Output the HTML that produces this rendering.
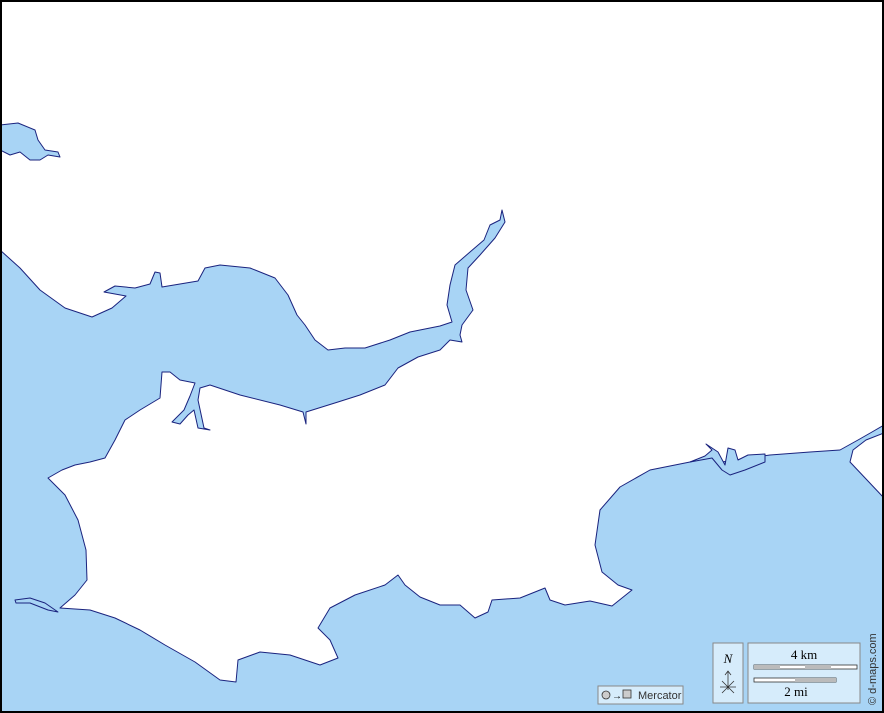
<!DOCTYPE html>
<html><head><meta charset="utf-8"><style>
html,body{margin:0;padding:0;background:#fff}
svg{display:block}
text{font-family:"Liberation Serif",serif}
</style></head><body>
<svg width="884" height="713" viewBox="0 0 884 713" xmlns="http://www.w3.org/2000/svg">
<rect x="0" y="0" width="884" height="713" fill="#fff"/>
<g fill="#a8d4f5" stroke="#1a237e" stroke-width="1" stroke-linejoin="round">
<path d="M0,125 L18,123 L35,130 L38,140 L45,150 L58,152 L60,157 L48,155 L40,160 L30,160 L20,152 L10,155 L0,150 Z"/>
<path d="M0,250 L20,268 L40,290 L65,308 L92,317 L112,308 L126,296 L104,292 L115,286 L135,288 L150,284 L155,272 L160,273 L162,287 L180,284 L198,281 L205,268 L220,265 L250,268 L275,278 L288,295 L297,315 L305,325 L315,340 L328,350 L345,348 L365,348 L390,340 L410,332 L440,326 L452,322 L447,305 L450,285 L455,265 L470,252 L484,240 L490,225 L500,220 L502,210 L505,222 L495,238 L480,255 L468,268 L466,290 L473,310 L462,325 L460,335 L462,342 L450,340 L440,350 L418,357 L398,368 L385,385 L360,395 L338,402 L306,412 L306,424 L303,412 L280,405 L240,395 L210,385 L200,388 L198,400 L204,428 L210,430 L198,428 L194,410 L188,415 L180,424 L172,422 L184,410 L190,396 L195,383 L180,380 L170,372 L162,372 L160,398 L140,410 L125,420 L115,440 L105,458 L90,462 L75,465 L62,470 L48,478 L65,495 L78,520 L86,550 L87,580 L75,595 L60,608 L90,610 L115,618 L140,630 L165,645 L195,662 L220,680 L236,682 L238,660 L260,652 L290,655 L320,665 L338,658 L330,640 L318,628 L330,608 L355,595 L385,585 L398,575 L405,585 L420,597 L440,605 L460,605 L475,618 L488,612 L492,600 L520,598 L545,588 L550,600 L565,605 L590,601 L612,606 L632,590 L618,585 L602,572 L595,545 L600,510 L620,487 L650,470 L690,462 L710,456 L722,462 L735,460 L770,455 L810,452 L840,450 L858,440 L872,432 L884,425 L884,433 L866,440 L853,450 L850,462 L884,498 L884,713 L0,713 Z"/>
<path d="M15,600 L30,598 L45,603 L58,612 L48,610 L30,603 L16,603 Z"/>
<path d="M690,462 L705,456 L712,450 L706,444 L718,452 L725,465 L728,448 L735,450 L738,460 L748,455 L765,454 L765,462 L745,470 L730,475 L722,470 L712,458 Z" fill="#a8d4f5"/>
</g>
<g>
<rect x="598" y="686" width="85" height="18" fill="#d6ecfb" stroke="#888"/>
<circle cx="606" cy="695" r="4" fill="#ccc" stroke="#333" stroke-width=".8"/>
<text x="612" y="699" font-size="10" font-family="Liberation Sans,sans-serif">→</text>
<rect x="623" y="690" width="8" height="8" fill="#ccc" stroke="#333" stroke-width=".8"/>
<text x="638" y="699" font-size="11" style="font-family:'Liberation Sans',sans-serif" fill="#333">Mercator</text>
<rect x="713" y="643" width="30" height="60" fill="#d6ecfb" stroke="#888"/>
<text x="728" y="663" font-size="13" font-style="italic" text-anchor="middle">N</text>
<path d="M728,690 L728,671 M725,675 L728,671 L731,675 M720,687 L736,687 M722,681 L734,693 M734,681 L722,693" stroke="#333" stroke-width=".8" fill="none"/>
<rect x="748" y="643" width="112" height="60" fill="#d6ecfb" stroke="#888"/>
<text x="804" y="659" font-size="13" text-anchor="middle">4 km</text>
<rect x="754" y="665" width="103" height="4" fill="#fff" stroke="#333" stroke-width=".8"/>
<rect x="754" y="665" width="26" height="4" fill="#bbb"/><rect x="805" y="665" width="26" height="4" fill="#bbb"/>
<rect x="754" y="678" width="82" height="4" fill="#fff" stroke="#333" stroke-width=".8"/>
<rect x="795" y="678" width="41" height="4" fill="#bbb"/>
<text x="796" y="696" font-size="13" text-anchor="middle">2 mi</text>
<text transform="translate(876,705) rotate(-90)" font-size="11" style="font-family:'Liberation Sans',sans-serif" fill="#333">© d-maps.com</text>
</g>
<rect x="1" y="1" width="882" height="711" fill="none" stroke="#000" stroke-width="2"/>
</svg>
</body></html>
